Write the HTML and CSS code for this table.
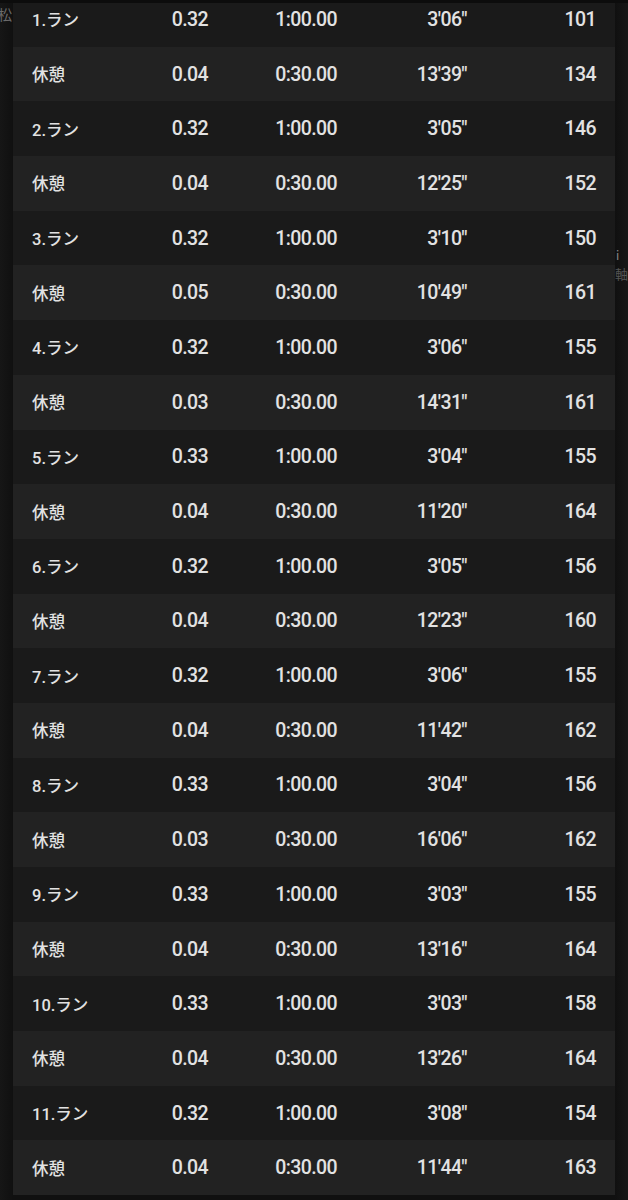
FILE: index.html
```html
<!DOCTYPE html>
<html lang="ja">
<head>
    <meta charset="UTF-8">
    <meta name="viewport" content="width=device-width, initial-scale=1.0">
    <title>インターバル ラップ</title>
    <link rel="stylesheet" href="styles.css">
</head>
<body>
    <div class="map-bg">
        <span class="map-label map-label--matsu">松</span>
        <span class="map-label map-label--pin">i</span>
        <span class="map-label map-label--jiku">軸</span>
    </div>

    <div class="top-edge"></div>

    <div class="lap-window">
        <div class="lap-list">
            <div class="lap run"><span class="name">1.ラン</span><span>0.32</span><span>1:00.00</span><span>3'06"</span><span>101</span></div>
            <div class="lap rest"><span class="name">休憩</span><span>0.04</span><span>0:30.00</span><span>13'39"</span><span>134</span></div>
            <div class="lap run"><span class="name">2.ラン</span><span>0.32</span><span>1:00.00</span><span>3'05"</span><span>146</span></div>
            <div class="lap rest"><span class="name">休憩</span><span>0.04</span><span>0:30.00</span><span>12'25"</span><span>152</span></div>
            <div class="lap run"><span class="name">3.ラン</span><span>0.32</span><span>1:00.00</span><span>3'10"</span><span>150</span></div>
            <div class="lap rest"><span class="name">休憩</span><span>0.05</span><span>0:30.00</span><span>10'49"</span><span>161</span></div>
            <div class="lap run"><span class="name">4.ラン</span><span>0.32</span><span>1:00.00</span><span>3'06"</span><span>155</span></div>
            <div class="lap rest"><span class="name">休憩</span><span>0.03</span><span>0:30.00</span><span>14'31"</span><span>161</span></div>
            <div class="lap run"><span class="name">5.ラン</span><span>0.33</span><span>1:00.00</span><span>3'04"</span><span>155</span></div>
            <div class="lap rest"><span class="name">休憩</span><span>0.04</span><span>0:30.00</span><span>11'20"</span><span>164</span></div>
            <div class="lap run"><span class="name">6.ラン</span><span>0.32</span><span>1:00.00</span><span>3'05"</span><span>156</span></div>
            <div class="lap rest"><span class="name">休憩</span><span>0.04</span><span>0:30.00</span><span>12'23"</span><span>160</span></div>
            <div class="lap run"><span class="name">7.ラン</span><span>0.32</span><span>1:00.00</span><span>3'06"</span><span>155</span></div>
            <div class="lap rest"><span class="name">休憩</span><span>0.04</span><span>0:30.00</span><span>11'42"</span><span>162</span></div>
            <div class="lap run"><span class="name">8.ラン</span><span>0.33</span><span>1:00.00</span><span>3'04"</span><span>156</span></div>
            <div class="lap rest"><span class="name">休憩</span><span>0.03</span><span>0:30.00</span><span>16'06"</span><span>162</span></div>
            <div class="lap run"><span class="name">9.ラン</span><span>0.33</span><span>1:00.00</span><span>3'03"</span><span>155</span></div>
            <div class="lap rest"><span class="name">休憩</span><span>0.04</span><span>0:30.00</span><span>13'16"</span><span>164</span></div>
            <div class="lap run"><span class="name">10.ラン</span><span>0.33</span><span>1:00.00</span><span>3'03"</span><span>158</span></div>
            <div class="lap rest"><span class="name">休憩</span><span>0.04</span><span>0:30.00</span><span>13'26"</span><span>164</span></div>
            <div class="lap run"><span class="name">11.ラン</span><span>0.32</span><span>1:00.00</span><span>3'08"</span><span>154</span></div>
            <div class="lap rest"><span class="name">休憩</span><span>0.04</span><span>0:30.00</span><span>11'44"</span><span>163</span></div>
        </div>
    </div>
</body>
</html>
```

FILE: styles.css
```css
body {
    margin: 0;
    padding: 0;
    background-color: #121212;
    font-family: Roboto, "Noto Sans CJK JP", sans-serif;
    color: #e2e2e2;
    position: relative;
    height: 1200px;
    overflow: hidden;
}

/* blurred map behind the sheet */
.map-bg {
    position: absolute;
    top: 0;
    left: 0;
    width: 628px;
    height: 1200px;
    background: linear-gradient(90deg, #161616 0, #101010 13px, #101010 615px, #171717 628px);
}

.map-label {
    position: absolute;
    font-family: "Noto Sans CJK JP", sans-serif;
    color: #6a6a6a;
    font-size: 14px;
}

.map-label--matsu {
    left: -2px;
    top: 4px;
}

.map-label--pin {
    left: 616px;
    top: 246px;
    font-size: 12px;
    color: #888;
}

.map-label--jiku {
    left: 615px;
    top: 264px;
    font-size: 13px;
    color: #555;
}

.top-edge {
    position: relative;
    height: 3px;
    background-color: #0c0c0c;
}

.lap-window {
    position: relative;
    margin-left: 13px;
    width: 602px;
    overflow: hidden;
}

.lap-list {
    margin-top: -11px;
}

.lap {
    display: grid;
    grid-template-columns: 121px 55px 129px 130px 129px;
    align-items: center;
    height: 54.7px;
    padding: 0 19px;
    font-size: 19.5px;
    font-weight: 500;
    letter-spacing: -0.6px;
}

.lap span {
    text-align: right;
}

.lap .name {
    text-align: left;
    font-size: 16.5px;
    font-weight: 500;
    letter-spacing: 0;
}

.run {
    background-color: #1a1a1a;
}

.rest {
    background-color: #222222;
}
```
